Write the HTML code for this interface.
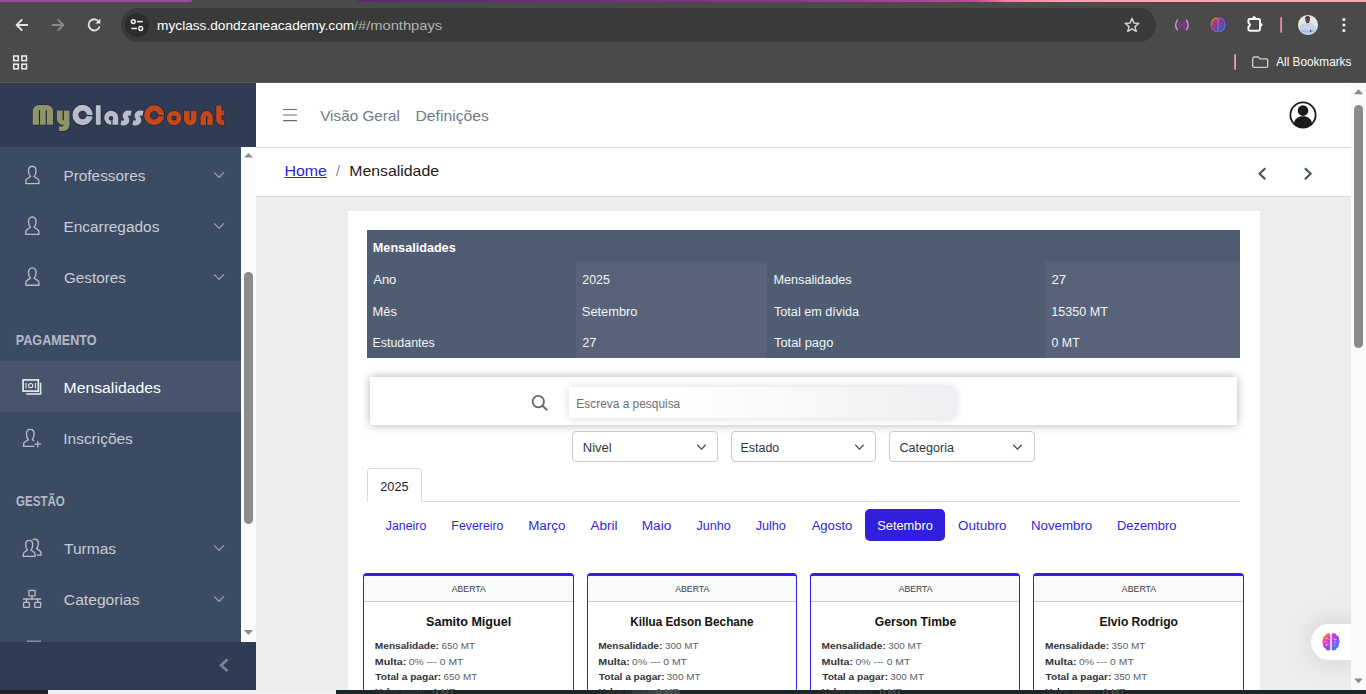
<!DOCTYPE html>
<html lang="pt">
<head>
<meta charset="utf-8">
<title>MyClassCount - Mensalidades</title>
<style>
*{box-sizing:border-box;margin:0;padding:0}
html,body{width:1366px;height:694px;overflow:hidden;background:#ebedef;font-family:"Liberation Sans",sans-serif;}
.a{position:absolute}
.t{position:absolute;white-space:nowrap;transform-origin:0 0;line-height:normal;font-family:"Liberation Sans",sans-serif;}
svg{position:absolute;overflow:visible}
</style>
</head>
<body>
<div id="root" style="position:relative;width:1366px;height:694px;overflow:hidden">
<!-- ===== Browser chrome ===== -->
<div class="a" id="chrome" style="left:0;top:0;width:1366px;height:83px;background:#4a4a4a"></div>
<div class="a" style="left:0;top:82px;width:1366px;height:1px;background:#5c5c5c"></div>
<div class="a" style="left:0;top:0;width:192px;height:2px;background:#95499a;border-radius:0 0 6px 0"></div>
<div class="a" style="left:357px;top:0;width:1009px;height:2px;border-radius:0 0 0 5px;background:linear-gradient(90deg,#5b2c6d 0,#692f78 20%,#9a3e8e 50%,#b54c96 61%,#fb7ca0 64.5%,#ffa0b4 70%,#ffa9b8 100%)"></div>
<!-- url pill -->
<div class="a" style="left:121px;top:8px;width:1035px;height:34px;border-radius:17px;background:#3a3a3a"></div>
<div class="a" style="left:125px;top:13px;width:24px;height:24px;border-radius:12px;background:#2b2b2b"></div>
<svg class="a" style="left:0;top:0" width="1366" height="694" viewBox="0 0 1366 694"><path d="M28 25H17M22.3 19.4L16.6 25L22.3 30.6" fill="none" stroke="#e4e4e4" stroke-width="1.8" stroke-linejoin="round"/><path d="M52 25H63M57.7 19.4L63.4 25L57.7 30.6" fill="none" stroke="#8a8a8a" stroke-width="1.8" stroke-linejoin="round"/><path d="M99.2 22.3A5.6 5.6 0 1 0 99.6 26.4" fill="none" stroke="#e4e4e4" stroke-width="1.8"/><path d="M100.3 18.6V23.6H95.3Z" fill="#e4e4e4"/><g fill="none" stroke="#efefef" stroke-width="1.5"><circle cx="133.3" cy="21.6" r="1.9"/><path d="M137 21.6H142.8"/><circle cx="140.7" cy="28.5" r="1.9"/><path d="M131.2 28.5H137"/></g><polygon points="1132.0,18.4 1133.9,23.0 1138.8,23.4 1135.0,26.6 1136.2,31.4 1132.0,28.8 1127.8,31.4 1129.0,26.6 1125.2,23.4 1130.1,23.0" fill="none" stroke="#d2d2d2" stroke-width="1.5" stroke-linejoin="round"/><g fill="none" stroke-width="1.5" stroke-linecap="round"><path stroke="#c795d8" d="M1177.4 20.2C1175.2 23.2 1175.2 26.8 1177.4 29.8M1186.4 20.2C1188.6 23.2 1188.6 26.8 1186.4 29.8"/><path d="M1180 22.6C1178.9 24.1 1178.9 25.9 1180 27.4M1183.8 22.6C1184.9 24.1 1184.9 25.9 1183.8 27.4" stroke="#a92abb" stroke-width="1.7"/></g><circle cx="1181.9" cy="25" r="1.1" fill="#a92abb"/><defs><linearGradient id="bg1" gradientUnits="userSpaceOnUse" x1="-7" y1="-7" x2="7" y2="7"><stop offset="0.08" stop-color="#ff8a2c"/><stop offset=".3" stop-color="#ec2fd0"/><stop offset=".6" stop-color="#8a4cf0"/><stop offset=".95" stop-color="#2f86ff"/></linearGradient></defs><g transform="translate(1218.1,25) scale(0.86)"><path d="M-0.7 -7.6C-2.6 -8.6 -4.9 -7.8 -5.4 -6C-7 -5.6 -7.9 -4 -7.3 -2.4C-8.3 -1.2 -8.3 0.8 -7.2 1.9C-7.8 3.6 -6.8 5.3 -5.2 5.7C-4.6 7.6 -2.4 8.4 -0.7 7.4Z" fill="url(#bg1)" fill-opacity="0.3" stroke="url(#bg1)" stroke-width="1.3"/><path d="M0.7 -7.6C2.6 -8.6 4.9 -7.8 5.4 -6C7 -5.6 7.9 -4 7.3 -2.4C8.3 -1.2 8.3 0.8 7.2 1.9C7.8 3.6 6.8 5.3 5.2 5.7C4.6 7.6 2.4 8.4 0.7 7.4Z" fill="url(#bg1)" fill-opacity="0.3" stroke="url(#bg1)" stroke-width="1.3"/><path d="M-5 -3.2C-3.6 -3.8 -2.6 -3 -2.4 -1.8M-5.4 2.6C-4.2 3.4 -2.8 2.8 -2.4 1.6M-6.2 -0.2H-3.4M2.4 -3.4L3.6 -1.8L5.2 -2.6M2.6 2.2L3.8 3.6M3 0.2H5" fill="none" stroke="url(#bg1)" stroke-width="1.0" opacity="1"/></g><g fill="none" stroke="#f6f6f6" stroke-width="2" stroke-linejoin="round"><path d="M1249.8 19H1258.6A1.4 1.4 0 0 1 1260 20.4V29.3A1.4 1.4 0 0 1 1258.6 30.7H1249.8A1.4 1.4 0 0 1 1248.4 29.3V27.2L1250.1 24.8L1248.4 22.4V20.4A1.4 1.4 0 0 1 1249.8 19Z"/></g><path d="M1252.3 18.2C1252.3 15.6 1255.9 15.6 1255.9 18.2ZM1260.8 22.9C1263.2 22.9 1263.2 26.5 1260.8 26.5Z" fill="#f6f6f6"/><rect x="1280.2" y="17" width="1.8" height="16" rx=".9" fill="#e58fa2"/><rect x="1234.2" y="54" width="1.8" height="16" rx=".9" fill="#e79cb0"/><defs><clipPath id="av"><circle cx="1308" cy="24.9" r="10"/></clipPath></defs><circle cx="1308" cy="24.9" r="10" fill="#e7e7e2"/><g clip-path="url(#av)"><path d="M1299.5 36V29C1299.5 25 1303 23 1305.2 22.4L1307.6 24L1310 22.4C1312.4 23 1316.3 25 1316.3 29V36Z" fill="#c4d2ea"/><path d="M1301.5 29.2C1304.5 31.2 1311 31.4 1314.2 29.4L1314.6 31.4C1311 33.4 1304.5 33.2 1301.2 31.2Z" fill="#a9bcdc"/><path d="M1310.2 29.6L1311.6 30.6L1311 32.2L1309.8 31.4Z" fill="#4a4a78"/><ellipse cx="1307.6" cy="19.6" rx="2.3" ry="3.3" fill="#6e4e44"/><path d="M1305.2 18.6C1305 15.4 1310.2 15.4 1310 18.6C1309 17.4 1306.2 17.4 1305.2 18.6Z" fill="#2b2630"/><path d="M1305.6 19.2H1309.6" stroke="#3a3036" stroke-width=".6"/><path d="M1306 22.6C1306.8 23.4 1308.4 23.4 1309.2 22.6L1308.8 21.6H1306.4Z" fill="#4a3630"/></g><g fill="#f2f2f2"><circle cx="1343.9" cy="19.5" r="1.55"/><circle cx="1343.9" cy="25" r="1.55"/><circle cx="1343.9" cy="30.5" r="1.55"/></g><g fill="none" stroke="#f0f0f0" stroke-width="1.5"><rect x="13.7" y="56" width="4.6" height="4.6"/><rect x="21.9" y="56" width="4.6" height="4.6"/><rect x="13.7" y="64.2" width="4.6" height="4.6"/><rect x="21.9" y="64.2" width="4.6" height="4.6"/></g><path d="M1252.7 58.4C1252.7 57.6 1253.3 57 1254.1 57H1258.2L1260 58.9H1266.3C1267.1 58.9 1267.7 59.5 1267.7 60.3V66C1267.7 66.8 1267.1 67.4 1266.3 67.4H1254.1C1253.3 67.4 1252.7 66.8 1252.7 66Z" fill="none" stroke="#c8c8c8" stroke-width="1.4"/></svg>

<!-- ===== Sidebar ===== -->
<div class="a" style="left:0;top:83px;width:256px;height:64px;background:#303c54"></div>
<div class="a" style="left:0;top:147px;width:241px;height:495px;background:#3c4b64"></div>
<div class="a" style="left:0;top:361px;width:241px;height:51px;background:#46546c"></div>
<div class="a" style="left:241px;top:147px;width:15px;height:495px;background:#fbfbfb"></div>
<div class="a" style="left:244px;top:272px;width:9px;height:252px;border-radius:4.5px;background:#8b8b8b"></div>
<div class="a" style="left:0;top:642px;width:256px;height:48px;background:#303c54"></div>
<svg class="a" style="left:0;top:0" width="1366" height="694" viewBox="0 0 1366 694"><path transform="translate(25,165)" fill="none" stroke="#b7bdc7" stroke-width="1.35" stroke-linejoin="round" d="M7.3 1.2C4.8 1.2 3.5 3.2 3.5 5.8C3.5 8 4 10 5.5 11.5L1.8 14C0.8 14.8 0.8 15.5 0.8 16.5L0.8 18.6L13.9 18.6L13.9 16.5C13.9 15.5 13.9 14.8 12.9 14L9.1 11.5C10.6 10 11.1 8 11.1 5.8C11.1 3.2 9.8 1.2 7.3 1.2Z"/><path transform="translate(25,215.8)" fill="none" stroke="#b7bdc7" stroke-width="1.35" stroke-linejoin="round" d="M7.3 1.2C4.8 1.2 3.5 3.2 3.5 5.8C3.5 8 4 10 5.5 11.5L1.8 14C0.8 14.8 0.8 15.5 0.8 16.5L0.8 18.6L13.9 18.6L13.9 16.5C13.9 15.5 13.9 14.8 12.9 14L9.1 11.5C10.6 10 11.1 8 11.1 5.8C11.1 3.2 9.8 1.2 7.3 1.2Z"/><path transform="translate(25,266.6)" fill="none" stroke="#b7bdc7" stroke-width="1.35" stroke-linejoin="round" d="M7.3 1.2C4.8 1.2 3.5 3.2 3.5 5.8C3.5 8 4 10 5.5 11.5L1.8 14C0.8 14.8 0.8 15.5 0.8 16.5L0.8 18.6L13.9 18.6L13.9 16.5C13.9 15.5 13.9 14.8 12.9 14L9.1 11.5C10.6 10 11.1 8 11.1 5.8C11.1 3.2 9.8 1.2 7.3 1.2Z"/><path d="M214.4 172.7L219 177.3L223.6 172.7" fill="none" stroke="#a0a8b4" stroke-width="1.15" stroke-linecap="round" stroke-linejoin="round"/><path d="M214.4 223.7L219 228.3L223.6 223.7" fill="none" stroke="#a0a8b4" stroke-width="1.15" stroke-linecap="round" stroke-linejoin="round"/><path d="M214.4 274.7L219 279.3L223.6 274.7" fill="none" stroke="#a0a8b4" stroke-width="1.15" stroke-linecap="round" stroke-linejoin="round"/><path d="M214.4 545.7L219 550.3L223.6 545.7" fill="none" stroke="#a0a8b4" stroke-width="1.15" stroke-linecap="round" stroke-linejoin="round"/><path d="M214.4 596.7L219 601.3L223.6 596.7" fill="none" stroke="#a0a8b4" stroke-width="1.15" stroke-linecap="round" stroke-linejoin="round"/><g fill="none" stroke="#e6e9ed" stroke-width="1.2"><rect x="23.1" y="379.9" width="15.2" height="11.2" stroke-width="1.7"/><path d="M26 383V388.2M35.4 383V388.2" stroke-width="1.1"/><circle cx="30.7" cy="385.6" r="2.1" stroke-width="1.1"/><path d="M40.6 382.8V394H26.2" stroke-width="1.5"/></g><g fill="none" stroke="#b7bdc7" stroke-width="1.35" stroke-linejoin="round" stroke-linecap="round"><path d="M33.9 446.4L23.6 446.4L23.6 444.6C23.6 443.4 23.7 442.8 24.8 442L28.4 439.7C27 438.2 26.5 436.2 26.5 434C26.5 431.4 27.8 429.4 30.3 429.4C32.8 429.4 34.1 431.4 34.1 434C34.1 436.2 33.6 438.2 32.3 439.4L33.6 440.6"/><path d="M34.9 444.2H40.7M37.8 441.3V447.1" stroke-width="1.2"/></g><g fill="none" stroke="#b7bdc7" stroke-width="1.35" stroke-linejoin="round" stroke-linecap="round"><path d="M29.2 540.4C26.9 540.4 25.7 542.3 25.7 544.7C25.7 546.8 26.2 548.6 27.5 550L24.4 552.2C23.4 552.9 23.3 553.6 23.3 554.6L23.3 556.4L35.1 556.4L35.1 554.6C35.1 553.6 35 552.9 34 552.2L30.9 550C32.2 548.6 32.7 546.8 32.7 544.7C32.7 542.3 31.5 540.4 29.2 540.4Z"/><path d="M33.2 539.6C33.7 539.3 34.3 539.2 34.9 539.2C37.2 539.2 38.4 541.1 38.4 543.5C38.4 545.6 37.9 547.4 36.6 548.6L39.9 550.9C40.9 551.6 41 552.3 41 553.3L41 555.1L37.3 555.1"/></g><g fill="none" stroke="#b7bdc7" stroke-width="1.3" stroke-linejoin="round"><rect x="28.9" y="590.4" width="6.2" height="5.4" rx=".6"/><rect x="23.6" y="602.4" width="5.8" height="5" rx=".6"/><rect x="34.8" y="602.4" width="5.8" height="5" rx=".6"/><path d="M22.8 599H41.4" stroke-width="1.5"/><path d="M32 596V599M26.5 599V602.4M37.7 599V602.4"/></g><path d="M27 641.2H41" stroke="#b7bdc7" stroke-width="1.2" opacity=".8"/><path d="M227.5 659.5L221 665.3L227.5 671.1" fill="none" stroke="#7f8795" stroke-width="2.6"/><path d="M244 157.6L248.5 152.9L253 157.6Z" fill="#8b8b8b"/><path d="M243.8 630L248.5 634.8L253.2 630Z" fill="#8b8b8b"/></svg><svg class="a" style="left:0;top:0" width="1366" height="694" viewBox="0 0 1366 694"><g stroke="#202941" stroke-width="1.5" stroke-linejoin="round" opacity=".95"><path fill="#8f9566" d="M32.7 124.8V111.2A6.2 6.2 0 0 1 38.9 105H46.9A6.2 6.2 0 0 1 53.1 111.2V124.8Z"/><path d="M39.5 110L39.5 124.8" stroke="#202941" stroke-width="1.15" fill="none"/><path d="M46.3 110L46.3 124.8" stroke="#202941" stroke-width="1.15" fill="none"/><path fill="#8f9566" d="M56.8 110.6H69.5V125A6.1 6.1 0 0 1 63.4 131.1H58.8V126.6H61.9A1.8 1.8 0 0 0 63.7 124.8L63.1 124.9A6.3 6.3 0 0 1 56.8 118.6Z"/><path d="M63.2 110.6L63.2 120.2" stroke="#202941" stroke-width="1.25" fill="none"/><path fill-rule="evenodd" fill="#b9bdc9" d="M72.39999999999999 115A10.2 10.2 0 1 0 92.8 115A10.2 10.2 0 1 0 72.39999999999999 115ZM78.39999999999999 115A4.2 4.2 0 1 0 86.8 115A4.2 4.2 0 1 0 78.39999999999999 115Z"/><path d="M86.6 115.3L93 115.9" stroke="#202941" stroke-width="1.2" fill="none"/><rect x="95.8" y="105.2" width="4.9" height="19.6" fill="#b9bdc9"/><path fill-rule="evenodd" fill="#b9bdc9" d="M104.2 117.7A7.05 7.05 0 0 1 118.3 117.7V124.8H111.2A7.05 7.05 0 0 1 104.2 117.7ZM108.8 118.2A2.2 2.2 0 1 0 113.2 118.2A2.2 2.2 0 1 0 108.8 118.2Z"/><path d="M111.9 120.2L111.9 124.8" stroke="#202941" stroke-width="1.25" fill="none"/><path fill-rule="evenodd" fill="#c2471c" d="M144.1 115.2A10.1 10.1 0 1 0 164.29999999999998 115.2A10.1 10.1 0 1 0 144.1 115.2ZM150.0 115.2A4.2 4.2 0 1 0 158.39999999999998 115.2A4.2 4.2 0 1 0 150.0 115.2Z"/><path d="M158.2 115.4L164.6 116" stroke="#202941" stroke-width="1.2" fill="none"/><path fill-rule="evenodd" fill="#c2471c" d="M166.79999999999998 118A7.3 7.3 0 1 0 181.4 118A7.3 7.3 0 1 0 166.79999999999998 118ZM171.6 118A2.5 2.5 0 1 0 176.6 118A2.5 2.5 0 1 0 171.6 118Z"/><path fill="#c2471c" d="M183.9 110.7H196.6V118.9A6.35 6.35 0 0 1 183.9 118.9Z"/><path d="M190.3 110.7L190.3 120.3" stroke="#202941" stroke-width="1.25" fill="none"/><path fill="#c2471c" d="M200.5 125.2V117A6.15 6.15 0 0 1 212.8 117V125.2Z"/><path d="M206.6 116L206.6 125.2" stroke="#202941" stroke-width="1.25" fill="none"/><path fill="#c2471c" d="M216.2 105.6H221.5V110.7H224.2V115.3H221.5V118.4A2.2 2.2 0 0 0 223.7 120.6H224.2V125.2H221.8A5.6 5.6 0 0 1 216.2 119.6Z"/></g><path fill="#8f9566" d="M32.7 124.8V111.2A6.2 6.2 0 0 1 38.9 105H46.9A6.2 6.2 0 0 1 53.1 111.2V124.8Z"/><path d="M39.5 110L39.5 124.8" stroke="#202941" stroke-width="1.15" fill="none"/><path d="M46.3 110L46.3 124.8" stroke="#202941" stroke-width="1.15" fill="none"/><path fill="#8f9566" d="M56.8 110.6H69.5V125A6.1 6.1 0 0 1 63.4 131.1H58.8V126.6H61.9A1.8 1.8 0 0 0 63.7 124.8L63.1 124.9A6.3 6.3 0 0 1 56.8 118.6Z"/><path d="M63.2 110.6L63.2 120.2" stroke="#202941" stroke-width="1.25" fill="none"/><path fill-rule="evenodd" fill="#b9bdc9" d="M72.39999999999999 115A10.2 10.2 0 1 0 92.8 115A10.2 10.2 0 1 0 72.39999999999999 115ZM78.39999999999999 115A4.2 4.2 0 1 0 86.8 115A4.2 4.2 0 1 0 78.39999999999999 115Z"/><path d="M86.6 115.3L93 115.9" stroke="#202941" stroke-width="1.2" fill="none"/><rect x="95.8" y="105.2" width="4.9" height="19.6" fill="#b9bdc9"/><path fill-rule="evenodd" fill="#b9bdc9" d="M104.2 117.7A7.05 7.05 0 0 1 118.3 117.7V124.8H111.2A7.05 7.05 0 0 1 104.2 117.7ZM108.8 118.2A2.2 2.2 0 1 0 113.2 118.2A2.2 2.2 0 1 0 108.8 118.2Z"/><path d="M111.9 120.2L111.9 124.8" stroke="#202941" stroke-width="1.25" fill="none"/><path transform="translate(0,0)" fill="none" stroke="#b9bdc9" stroke-width="5" d="M131 113.4C124.6 112 124.6 115.8 126 118C127.4 120.2 127.4 124 121 122.6"/><path transform="translate(11.9,0)" fill="none" stroke="#b9bdc9" stroke-width="5" d="M131 113.4C124.6 112 124.6 115.8 126 118C127.4 120.2 127.4 124 121 122.6"/><path fill-rule="evenodd" fill="#c2471c" d="M144.1 115.2A10.1 10.1 0 1 0 164.29999999999998 115.2A10.1 10.1 0 1 0 144.1 115.2ZM150.0 115.2A4.2 4.2 0 1 0 158.39999999999998 115.2A4.2 4.2 0 1 0 150.0 115.2Z"/><path d="M158.2 115.4L164.6 116" stroke="#202941" stroke-width="1.2" fill="none"/><path fill-rule="evenodd" fill="#c2471c" d="M166.79999999999998 118A7.3 7.3 0 1 0 181.4 118A7.3 7.3 0 1 0 166.79999999999998 118ZM171.6 118A2.5 2.5 0 1 0 176.6 118A2.5 2.5 0 1 0 171.6 118Z"/><path fill="#c2471c" d="M183.9 110.7H196.6V118.9A6.35 6.35 0 0 1 183.9 118.9Z"/><path d="M190.3 110.7L190.3 120.3" stroke="#202941" stroke-width="1.25" fill="none"/><path fill="#c2471c" d="M200.5 125.2V117A6.15 6.15 0 0 1 212.8 117V125.2Z"/><path d="M206.6 116L206.6 125.2" stroke="#202941" stroke-width="1.25" fill="none"/><path fill="#c2471c" d="M216.2 105.6H221.5V110.7H224.2V115.3H221.5V118.4A2.2 2.2 0 0 0 223.7 120.6H224.2V125.2H221.8A5.6 5.6 0 0 1 216.2 119.6Z"/></svg>

<!-- ===== Header ===== -->
<div class="a" style="left:256px;top:83px;width:1095px;height:64px;background:#fff"></div>
<div class="a" style="left:256px;top:147px;width:1095px;height:1px;background:#d8dbe0"></div>
<div class="a" style="left:256px;top:148px;width:1095px;height:48px;background:#fff"></div>
<div class="a" style="left:256px;top:196px;width:1095px;height:1px;background:#d8dbe0"></div>
<svg class="a" style="left:0;top:0" width="1366" height="694" viewBox="0 0 1366 694"><path d="M283 109.5H297M283 115H297M283 120.6H297" stroke="#646d7e" stroke-width="1.2"/><circle cx="1303" cy="115" r="12.6" fill="#fff" stroke="#1b1b1b" stroke-width="1.8"/><circle cx="1303" cy="110.6" r="5.3" fill="#1b1b1b"/><path d="M1293.9 123.5C1294.6 118.8 1298 116.2 1303 116.2C1308 116.2 1311.4 118.8 1312.1 123.5C1309.8 126.2 1306.6 127.6 1303 127.6C1299.4 127.6 1296.2 126.2 1293.9 123.5Z" fill="#1b1b1b"/><path d="M1265.3 168.3L1259.5 173.8L1265.3 179.3" fill="none" stroke="#3f4d66" stroke-width="2"/><path d="M1304.9 168.3L1310.7 173.8L1304.9 179.3" fill="none" stroke="#3f4d66" stroke-width="2"/></svg>

<!-- ===== Content ===== -->
<div class="a" style="left:348px;top:211px;width:912px;height:479px;background:#fff"></div>
<!-- summary table -->
<div class="a" style="left:367px;top:230px;width:873px;height:127.5px;background:#4f5d73"></div>
<div class="a" style="left:576px;top:262px;width:191px;height:95.5px;background:#58637a"></div>
<div class="a" style="left:1045px;top:262px;width:195px;height:95.5px;background:#58637a"></div>
<!-- search -->
<div class="a" style="left:370px;top:377px;width:867px;height:48px;background:#fff;box-shadow:0 0 9px rgba(0,0,0,.3)"></div>
<div class="a" style="left:569px;top:387px;width:386px;height:31px;border-radius:2px;background:linear-gradient(90deg,#fff 0,#fff 28%,#efeff1 100%);box-shadow:0 0 9px rgba(45,35,85,.2)"></div>
<!-- selects -->
<div class="a" style="left:572px;top:431px;width:146px;height:31px;border:1px solid #c3c8d1;border-radius:4px;background:#fff"></div>
<div class="a" style="left:731px;top:431px;width:145px;height:31px;border:1px solid #c3c8d1;border-radius:4px;background:#fff"></div>
<div class="a" style="left:889px;top:431px;width:146px;height:31px;border:1px solid #c3c8d1;border-radius:4px;background:#fff"></div>
<!-- tabs -->
<div class="a" style="left:367px;top:501px;width:873px;height:1px;background:#d8dbe0"></div>
<div class="a" style="left:367px;top:468px;width:55px;height:34px;border:1px solid #d8dbe0;border-bottom:1px solid #fff;border-radius:4px 4px 0 0;background:#fff"></div>
<!-- active month -->
<div class="a" style="left:865px;top:509px;width:80px;height:32px;border-radius:5px;background:#321fdb"></div>
<!-- cards -->
<div class="a" style="left:363px;top:573px;width:211px;height:125px;border:1px solid #321fdb;border-top:3px solid #321fdb;border-bottom:0;border-radius:4px 4px 0 0;background:#fff;overflow:hidden"><div style="height:26px;background:#f8f9f9;border-bottom:1px solid #cbcdd0"></div></div>
<div class="a" style="left:587px;top:573px;width:210px;height:125px;border:1px solid #321fdb;border-top:3px solid #321fdb;border-bottom:0;border-radius:4px 4px 0 0;background:#fff;overflow:hidden"><div style="height:26px;background:#f8f9f9;border-bottom:1px solid #cbcdd0"></div></div>
<div class="a" style="left:810px;top:573px;width:210px;height:125px;border:1px solid #321fdb;border-top:3px solid #321fdb;border-bottom:0;border-radius:4px 4px 0 0;background:#fff;overflow:hidden"><div style="height:26px;background:#f8f9f9;border-bottom:1px solid #cbcdd0"></div></div>
<div class="a" style="left:1033px;top:573px;width:211px;height:125px;border:1px solid #321fdb;border-top:3px solid #321fdb;border-bottom:0;border-radius:4px 4px 0 0;background:#fff;overflow:hidden"><div style="height:26px;background:#f8f9f9;border-bottom:1px solid #cbcdd0"></div></div>
<svg class="a" style="left:0;top:0" width="1366" height="694" viewBox="0 0 1366 694"><circle cx="538.3" cy="401.6" r="5.7" fill="none" stroke="#666" stroke-width="1.8"/><path d="M542.4 405.8L546.7 409.7" stroke="#666" stroke-width="1.9" stroke-linecap="round"/><path d="M697.3 444.7L701.5 449.09999999999997L705.7 444.7" fill="none" stroke="#444b58" stroke-width="1.25"/><path d="M855.3 444.7L859.5 449.09999999999997L863.7 444.7" fill="none" stroke="#444b58" stroke-width="1.25"/><path d="M1013.3 444.7L1017.5 449.09999999999997L1021.7 444.7" fill="none" stroke="#444b58" stroke-width="1.25"/></svg>

<!-- floating brain -->
<div class="a" style="left:1311px;top:624px;width:60px;height:36px;border-radius:18px;background:#fff;box-shadow:0 0 28px rgba(0,0,0,.13)"></div>
<svg class="a" style="left:0;top:0" width="1366" height="694" viewBox="0 0 1366 694"><defs><linearGradient id="bg2" gradientUnits="userSpaceOnUse" x1="-7" y1="-7" x2="7" y2="7"><stop offset="0.08" stop-color="#ff8a2c"/><stop offset=".3" stop-color="#ec2fd0"/><stop offset=".6" stop-color="#8a4cf0"/><stop offset=".95" stop-color="#2f86ff"/></linearGradient></defs><g transform="translate(1331,642) scale(1.08)"><path d="M-0.7 -7.6C-2.6 -8.6 -4.9 -7.8 -5.4 -6C-7 -5.6 -7.9 -4 -7.3 -2.4C-8.3 -1.2 -8.3 0.8 -7.2 1.9C-7.8 3.6 -6.8 5.3 -5.2 5.7C-4.6 7.6 -2.4 8.4 -0.7 7.4Z" fill="url(#bg2)" fill-opacity="1" stroke="url(#bg2)" stroke-width="0"/><path d="M0.7 -7.6C2.6 -8.6 4.9 -7.8 5.4 -6C7 -5.6 7.9 -4 7.3 -2.4C8.3 -1.2 8.3 0.8 7.2 1.9C7.8 3.6 6.8 5.3 5.2 5.7C4.6 7.6 2.4 8.4 0.7 7.4Z" fill="url(#bg2)" fill-opacity="1" stroke="url(#bg2)" stroke-width="0"/><path d="M-5 -3.2C-3.6 -3.8 -2.6 -3 -2.4 -1.8M-5.4 2.6C-4.2 3.4 -2.8 2.8 -2.4 1.6M-6.2 -0.2H-3.4M2.4 -3.4L3.6 -1.8L5.2 -2.6M2.6 2.2L3.8 3.6M3 0.2H5" fill="none" stroke="#fff" stroke-width="0.7" opacity="0.8"/></g></svg>

<!-- page scrollbar -->
<div class="a" style="left:1351px;top:83px;width:15px;height:607px;background:#fafafa"></div>
<div class="a" style="left:1354px;top:105px;width:9px;height:243px;border-radius:4.5px;background:#8b8b8b"></div>
<svg class="a" style="left:0;top:0" width="1366" height="694" viewBox="0 0 1366 694"><path d="M1354 94.2L1358.5 88.9L1363 94.2Z" fill="#8b8b8b"/><path d="M1354 678.5L1358.5 683.3L1363 678.5Z" fill="#8b8b8b"/></svg>

<!-- bottom strip -->
<div class="a" style="left:0;top:690px;width:1366px;height:4px;background:#1a2727"></div>
<div class="a" style="left:0;top:690px;width:48px;height:4px;background:#222"></div>
<div class="a" style="left:48px;top:690px;width:288px;height:4px;background:#f0f0f0"></div>
<div class="a" style="left:632px;top:690px;width:48px;height:4px;background:#3a4545"></div>

<span class="t" style="left:157px;top:18px;font-size:13.4px;color:#ffffff;transform:translateX(0.12px) scaleX(1.0193);">myclass.dondzaneacademy.com</span>
<span class="t" style="left:353px;top:18px;font-size:13.4px;color:#b4b4b4;transform:translateX(0.90px) scaleX(1.0982);">/#/monthpays</span>
<span class="t" style="left:1276px;top:55px;font-size:12.5px;color:#ffffff;transform:translateX(0.27px) scaleX(0.9400);">All Bookmarks</span>
<span class="t" style="left:63px;top:167px;font-size:15.5px;color:#c9cdd4;transform:translateX(0.43px) scaleX(0.9916);">Professores</span>
<span class="t" style="left:63px;top:218px;font-size:15.5px;color:#c9cdd4;transform:translateX(0.40px) scaleX(0.9942);">Encarregados</span>
<span class="t" style="left:63px;top:269px;font-size:15.5px;color:#c9cdd4;transform:translateX(0.93px) scaleX(0.9846);">Gestores</span>
<span class="t" style="left:15px;top:332px;font-size:14px;color:#b3b9c4;font-weight:700;transform:translateX(0.79px) scaleX(0.8995);">PAGAMENTO</span>
<span class="t" style="left:63px;top:379px;font-size:15.5px;color:#ffffff;transform:translateX(0.50px) scaleX(1.0182);">Mensalidades</span>
<span class="t" style="left:63px;top:430px;font-size:15.5px;color:#c9cdd4;transform:translateX(0.25px) scaleX(0.9975);">Inscri&ccedil;&otilde;es</span>
<span class="t" style="left:16px;top:493px;font-size:14px;color:#b3b9c4;font-weight:700;transform:translateX(0.08px) scaleX(0.8248);">GEST&Atilde;O</span>
<span class="t" style="left:63px;top:540px;font-size:15.5px;color:#c9cdd4;transform:translateX(0.95px) scaleX(1.0040);">Turmas</span>
<span class="t" style="left:63px;top:591px;font-size:15.5px;color:#c9cdd4;transform:translateX(0.87px) scaleX(1.0086);">Categorias</span>
<span class="t" style="left:320px;top:107px;font-size:15px;color:#6f7b89;transform:translateX(0.16px) scaleX(1.0198);">Vis&atilde;o Geral</span>
<span class="t" style="left:415px;top:107px;font-size:15px;color:#6f7b89;transform:translateX(0.47px) scaleX(1.0496);">Defini&ccedil;&otilde;es</span>
<span class="t" style="left:284px;top:163px;font-size:14.5px;color:#321fdb;transform:translateX(0.39px) scaleX(1.1015);text-decoration:underline;">Home</span>
<span class="t" style="left:336px;top:163px;font-size:14.5px;color:#7d8795;">/</span>
<span class="t" style="left:349px;top:163px;font-size:14.5px;color:#1c1c1c;transform:translateX(0.22px) scaleX(1.0921);">Mensalidade</span>
<span class="t" style="left:372px;top:240px;font-size:13px;color:#ffffff;font-weight:700;transform:translateX(0.85px) scaleX(0.9714);">Mensalidades</span>
<span class="t" style="left:373px;top:273px;font-size:12.5px;color:#f4f5f7;transform:translateX(0.23px) scaleX(1.0395);">Ano</span>
<span class="t" style="left:372px;top:305px;font-size:12.5px;color:#f4f5f7;transform:translateX(0.55px) scaleX(1.0336);">M&ecirc;s</span>
<span class="t" style="left:372px;top:336px;font-size:12.5px;color:#f4f5f7;transform:translateX(0.48px) scaleX(0.9936);">Estudantes</span>
<span class="t" style="left:582px;top:273px;font-size:12.5px;color:#f4f5f7;transform:translateX(0.29px) scaleX(0.9872);">2025</span>
<span class="t" style="left:581px;top:305px;font-size:12.5px;color:#f4f5f7;transform:translateX(0.87px) scaleX(1.0253);">Setembro</span>
<span class="t" style="left:582px;top:336px;font-size:12.5px;color:#f4f5f7;transform:translateX(0.14px) scaleX(1.0246);">27</span>
<span class="t" style="left:773px;top:273px;font-size:12.5px;color:#f4f5f7;transform:translateX(0.40px) scaleX(1.0142);">Mensalidades</span>
<span class="t" style="left:774px;top:305px;font-size:12.5px;color:#f4f5f7;transform:translateX(0.00px) scaleX(1.0111);">Total em d&iacute;vida</span>
<span class="t" style="left:774px;top:336px;font-size:12.5px;color:#f4f5f7;transform:translateX(0.00px) scaleX(1.0281);">Total pago</span>
<span class="t" style="left:1051px;top:273px;font-size:12.5px;color:#f4f5f7;transform:translateX(0.48px) scaleX(1.0604);">27</span>
<span class="t" style="left:1051px;top:305px;font-size:12.5px;color:#f4f5f7;transform:translateX(0.18px) scaleX(1.0083);">15350 MT</span>
<span class="t" style="left:1051px;top:336px;font-size:12.5px;color:#f4f5f7;transform:translateX(0.57px) scaleX(0.9879);">0 MT</span>
<span class="t" style="left:576px;top:397px;font-size:12px;color:#707070;transform:translateX(0.35px) scaleX(0.9918);">Escreva a pesquisa</span>
<span class="t" style="left:582px;top:441px;font-size:12.5px;color:#30353d;transform:translateX(0.78px) scaleX(1.0363);">Nivel</span>
<span class="t" style="left:740px;top:441px;font-size:12.5px;color:#30353d;transform:translateX(0.60px) scaleX(0.9916);">Estado</span>
<span class="t" style="left:899px;top:441px;font-size:12.5px;color:#30353d;transform:translateX(0.54px) scaleX(1.0049);">Categoria</span>
<span class="t" style="left:380px;top:480px;font-size:12.5px;color:#1e1e1e;transform:translateX(0.26px) scaleX(1.0167);">2025</span>
<span class="t" style="left:385px;top:519px;font-size:12.3px;color:#321fdb;transform:translateX(0.82px) scaleX(1.0052);">Janeiro</span>
<span class="t" style="left:451px;top:519px;font-size:12.3px;color:#321fdb;transform:translateX(0.37px) scaleX(1.0025);">Fevereiro</span>
<span class="t" style="left:528px;top:519px;font-size:12.3px;color:#321fdb;transform:translateX(0.23px) scaleX(1.0865);">Mar&ccedil;o</span>
<span class="t" style="left:590px;top:519px;font-size:12.3px;color:#321fdb;transform:translateX(0.44px) scaleX(1.1031);">Abril</span>
<span class="t" style="left:641px;top:519px;font-size:12.3px;color:#321fdb;transform:translateX(0.70px) scaleX(1.1095);">Maio</span>
<span class="t" style="left:696px;top:519px;font-size:12.3px;color:#321fdb;transform:translateX(0.44px) scaleX(1.0255);">Junho</span>
<span class="t" style="left:755px;top:519px;font-size:12.3px;color:#321fdb;transform:translateX(0.63px) scaleX(1.0291);">Julho</span>
<span class="t" style="left:811px;top:519px;font-size:12.3px;color:#321fdb;transform:translateX(0.65px) scaleX(1.0615);">Agosto</span>
<span class="t" style="left:877px;top:519px;font-size:12.3px;color:#ffffff;transform:translateX(0.25px) scaleX(1.0413);">Setembro</span>
<span class="t" style="left:957px;top:519px;font-size:12.3px;color:#321fdb;transform:translateX(0.96px) scaleX(1.0946);">Outubro</span>
<span class="t" style="left:1030px;top:519px;font-size:12.3px;color:#321fdb;transform:translateX(0.90px) scaleX(1.0811);">Novembro</span>
<span class="t" style="left:1116px;top:519px;font-size:12.3px;color:#321fdb;transform:translateX(0.93px) scaleX(1.0506);">Dezembro</span>
<span class="t" style="left:451px;top:583px;font-size:9.8px;color:#3a4048;transform:translateX(0.69px) scaleX(0.8895);">ABERTA</span>
<span class="t" style="left:426px;top:615px;font-size:12px;color:#111111;font-weight:700;transform:translateX(0.11px) scaleX(1.0452);">Samito Miguel</span>
<span class="t" style="left:374px;top:641px;font-size:9px;color:#2f3338;font-weight:700;transform:translateX(0.87px) scaleX(1.1246);">Mensalidade:</span>
<span class="t" style="left:441px;top:641px;font-size:9px;color:#5a5f66;transform:translateX(0.56px) scaleX(1.1014);">650 MT</span>
<span class="t" style="left:374px;top:657px;font-size:9px;color:#2f3338;font-weight:700;transform:translateX(0.77px) scaleX(1.1937);">Multa:</span>
<span class="t" style="left:408px;top:657px;font-size:9px;color:#5a5f66;transform:translateX(0.72px) scaleX(1.1505);">0% --- 0 MT</span>
<span class="t" style="left:375px;top:672px;font-size:9px;color:#2f3338;font-weight:700;transform:translateX(0.33px) scaleX(1.1294);">Total a pagar:</span>
<span class="t" style="left:443px;top:672px;font-size:9px;color:#5a5f66;transform:translateX(0.54px) scaleX(1.1039);">650 MT</span>
<span class="t" style="left:375px;top:687px;font-size:9px;color:#2f3338;font-weight:700;transform:translateX(0.30px) scaleX(1.0854);">Valor pago:</span>
<span class="t" style="left:432px;top:687px;font-size:9px;color:#5a5f66;transform:translateX(0.60px) scaleX(1.0919);">0 MT</span>
<span class="t" style="left:675px;top:583px;font-size:9.8px;color:#3a4048;transform:translateX(0.18px) scaleX(0.8904);">ABERTA</span>
<span class="t" style="left:630px;top:615px;font-size:12px;color:#111111;font-weight:700;transform:translateX(0.27px) scaleX(0.9779);">Killua Edson Bechane</span>
<span class="t" style="left:598px;top:641px;font-size:9px;color:#2f3338;font-weight:700;transform:translateX(0.15px) scaleX(1.1262);">Mensalidade:</span>
<span class="t" style="left:664px;top:641px;font-size:9px;color:#5a5f66;transform:translateX(0.91px) scaleX(1.1008);">300 MT</span>
<span class="t" style="left:598px;top:657px;font-size:9px;color:#2f3338;font-weight:700;transform:translateX(0.23px) scaleX(1.1909);">Multa:</span>
<span class="t" style="left:632px;top:657px;font-size:9px;color:#5a5f66;transform:translateX(0.12px) scaleX(1.1546);">0% --- 0 MT</span>
<span class="t" style="left:598px;top:672px;font-size:9px;color:#2f3338;font-weight:700;transform:translateX(0.87px) scaleX(1.1264);">Total a pagar:</span>
<span class="t" style="left:666px;top:672px;font-size:9px;color:#5a5f66;transform:translateX(0.80px) scaleX(1.1073);">300 MT</span>
<span class="t" style="left:598px;top:687px;font-size:9px;color:#2f3338;font-weight:700;transform:translateX(0.70px) scaleX(1.0854);">Valor pago:</span>
<span class="t" style="left:656px;top:687px;font-size:9px;color:#5a5f66;transform:translateX(0.00px) scaleX(1.0919);">0 MT</span>
<span class="t" style="left:898px;top:583px;font-size:9.8px;color:#3a4048;transform:translateX(0.70px) scaleX(0.8833);">ABERTA</span>
<span class="t" style="left:874px;top:615px;font-size:12px;color:#111111;font-weight:700;transform:translateX(0.71px) scaleX(1.0123);">Gerson Timbe</span>
<span class="t" style="left:821px;top:641px;font-size:9px;color:#2f3338;font-weight:700;transform:translateX(0.62px) scaleX(1.1248);">Mensalidade:</span>
<span class="t" style="left:888px;top:641px;font-size:9px;color:#5a5f66;transform:translateX(0.34px) scaleX(1.0996);">300 MT</span>
<span class="t" style="left:821px;top:657px;font-size:9px;color:#2f3338;font-weight:700;transform:translateX(0.54px) scaleX(1.1927);">Multa:</span>
<span class="t" style="left:855px;top:657px;font-size:9px;color:#5a5f66;transform:translateX(0.58px) scaleX(1.1524);">0% --- 0 MT</span>
<span class="t" style="left:822px;top:672px;font-size:9px;color:#2f3338;font-weight:700;transform:translateX(0.19px) scaleX(1.1285);">Total a pagar:</span>
<span class="t" style="left:890px;top:672px;font-size:9px;color:#5a5f66;transform:translateX(0.22px) scaleX(1.1076);">300 MT</span>
<span class="t" style="left:822px;top:687px;font-size:9px;color:#2f3338;font-weight:700;transform:translateX(0.10px) scaleX(1.0854);">Valor pago:</span>
<span class="t" style="left:879px;top:687px;font-size:9px;color:#5a5f66;transform:translateX(0.40px) scaleX(1.0919);">0 MT</span>
<span class="t" style="left:1121px;top:583px;font-size:9.8px;color:#3a4048;transform:translateX(0.82px) scaleX(0.8964);">ABERTA</span>
<span class="t" style="left:1099px;top:615px;font-size:12px;color:#111111;font-weight:700;transform:translateX(0.40px) scaleX(1.0063);">Elvio Rodrigo</span>
<span class="t" style="left:1045px;top:641px;font-size:9px;color:#2f3338;font-weight:700;transform:translateX(0.07px) scaleX(1.1230);">Mensalidade:</span>
<span class="t" style="left:1111px;top:641px;font-size:9px;color:#5a5f66;transform:translateX(0.56px) scaleX(1.1066);">350 MT</span>
<span class="t" style="left:1044px;top:657px;font-size:9px;color:#2f3338;font-weight:700;transform:translateX(0.97px) scaleX(1.1925);">Multa:</span>
<span class="t" style="left:1078px;top:657px;font-size:9px;color:#5a5f66;transform:translateX(0.88px) scaleX(1.1556);">0% --- 0 MT</span>
<span class="t" style="left:1045px;top:672px;font-size:9px;color:#2f3338;font-weight:700;transform:translateX(0.54px) scaleX(1.1276);">Total a pagar:</span>
<span class="t" style="left:1113px;top:672px;font-size:9px;color:#5a5f66;transform:translateX(0.77px) scaleX(1.0949);">350 MT</span>
<span class="t" style="left:1045px;top:687px;font-size:9px;color:#2f3338;font-weight:700;transform:translateX(0.50px) scaleX(1.0854);">Valor pago:</span>
<span class="t" style="left:1102px;top:687px;font-size:9px;color:#5a5f66;transform:translateX(0.80px) scaleX(1.0919);">0 MT</span>
</div>
</body>
</html>
